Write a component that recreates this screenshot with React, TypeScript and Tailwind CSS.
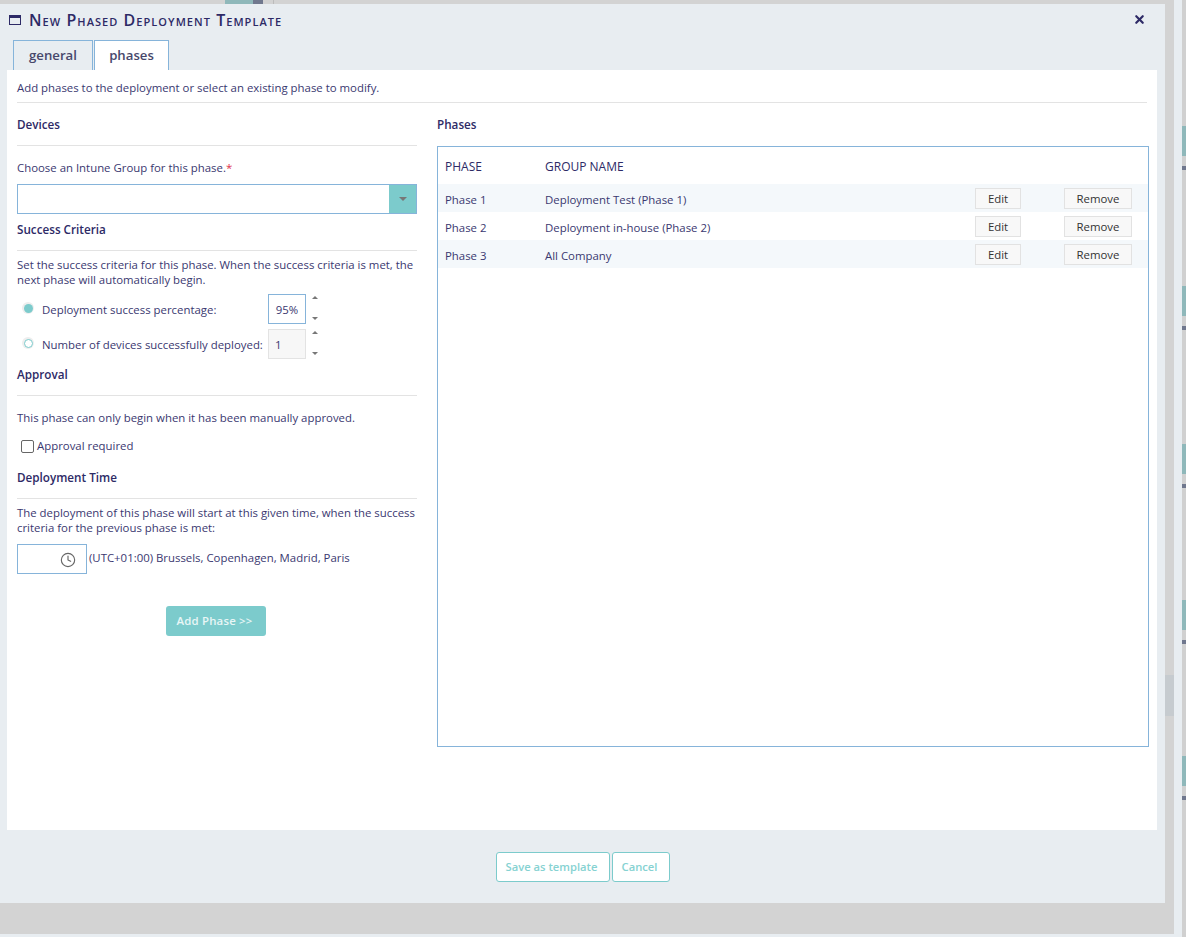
import { Clock, X } from "lucide-react";

const phases = [
    { name: "Phase 1", group: "Deployment Test (Phase 1)" },
    { name: "Phase 2", group: "Deployment in-house (Phase 2)" },
    { name: "Phase 3", group: "All Company" },
];

const sideBars = [
    { id: 1, margin: "mt-[126px]" },
    { id: 2, margin: "mt-[116px]" },
    { id: 3, margin: "mt-[114px]" },
    { id: 4, margin: "mt-[112px]" },
    { id: 5, margin: "mt-[112px]" },
];

function Heading({ children, className }: { children: string; className: string }) {
    return (
        <div className={`h-[31px] border-b border-[#e3e3e3] text-[11.7px] font-semibold leading-[18px] text-[#2d2a66] ${className}`}>
            {children}
        </div>
    );
}

function Spinner() {
    return (
        <div className="ml-[5px] flex h-[28px] w-[8px] flex-col items-center justify-between self-start py-[2px]">
            <span className="h-0 w-0 border-x-[3px] border-b-[3px] border-x-transparent border-b-[#777]" />
            <span className="h-0 w-0 border-x-[3px] border-t-[3px] border-x-transparent border-t-[#777]" />
        </div>
    );
}

function SmallButton({ label, className }: { label: string; className: string }) {
    return (
        <div className={`mt-[1px] flex h-[21px] items-center justify-center border border-[#e2e2e2] bg-[#f8f8f8] text-[11.4px] text-[#333] ${className}`}>
            {label}
        </div>
    );
}

export default function App() {
    return (
        <div className="flex h-[937px] w-[1186px] overflow-hidden bg-[#e8edf1] font-['Open_Sans',sans-serif] text-[11.4px] text-[#3a3870]">
            <div className="flex h-[934px] w-[1174px] flex-col bg-[#d3d3d3]">
                <div className="flex h-[4px] shrink-0 pl-[225px]">
                    <div className="w-[28px] bg-[#8fb8ba]" />
                    <div className="w-[10px] bg-[#70788e]" />
                    <div className="ml-[10px] w-[1px] bg-[#bcbcbc]" />
                </div>
                <div className="flex">
                    <div className="flex h-[899px] w-[1165px] flex-col bg-[#e8edf1]">
                        {/* title bar */}
                        <div className="flex h-[36px] shrink-0 items-center pl-[9px] pr-[19px]">
                            <svg width="12" height="10" viewBox="0 0 12 10" className="mr-[8px] mt-[-4px]">
                                <rect x="0.5" y="0.5" width="11" height="9" fill="none" stroke="#2d2a66" />
                                <rect x="0" y="0" width="12" height="3" fill="#2d2a66" />
                            </svg>
                            <span className="mt-[-4px] text-[16px] font-semibold leading-[20px] tracking-[1.05px] text-[#2d2a66] [font-variant:small-caps]">
                                New Phased Deployment Template
                            </span>
                            <X className="ml-auto mt-[-6px] h-[13px] w-[13px] text-[#2d2a66]" strokeWidth={4} />
                        </div>

                        {/* tabs */}
                        <div className="flex h-[30px] shrink-0 gap-[1px] pl-[13px]">
                            <div className="flex w-[80px] items-center justify-center border border-b-0 border-[#86b4da] text-[13.2px] font-semibold text-[#47476b]">
                                general
                            </div>
                            <div className="flex w-[75px] items-center justify-center border border-b-0 border-[#86b4da] bg-white text-[13.2px] font-semibold text-[#47476b]">
                                phases
                            </div>
                        </div>

                        {/* tab content */}
                        <div className="ml-[7px] h-[760px] w-[1150px] shrink-0 bg-white pl-[10px] pr-[10px]">
                            <div className="h-[33px] border-b border-[#e3e3e3] pt-[10px] leading-[16px]">
                                Add phases to the deployment or select an existing phase to modify.
                            </div>
                            <div className="flex gap-[20px]">
                                <div className="w-[400px] shrink-0">
                                    <Heading className="mt-[12px]">Devices</Heading>
                                    <div className="mt-[14px] leading-[16px]">
                                        Choose an Intune Group for this phase.<span className="text-[#e0324b]">*</span>
                                    </div>
                                    <div className="mt-[8px] flex h-[30px] border border-[#86b4da]">
                                        <div className="flex-1" />
                                        <div className="flex w-[27px] items-center justify-center bg-[#7ccbcc]">
                                            <span className="h-0 w-0 border-x-[4px] border-t-[4px] border-x-transparent border-t-[#777]" />
                                        </div>
                                    </div>

                                    <Heading className="mt-[6px]">Success Criteria</Heading>
                                    <p className="mt-[6px] leading-[15px]">
                                        Set the success criteria for this phase. When the success criteria is met, the next phase will automatically begin.
                                    </p>
                                    <div className="mt-[7px] flex h-[30px] items-center pl-[5px]">
                                        <span className="mt-[-2px] flex h-[12px] w-[12px] items-center justify-center rounded-full bg-[#eeeeee]">
                                            <span className="h-[9px] w-[9px] rounded-full bg-[#7ccbcc]" />
                                        </span>
                                        <span className="ml-[8px] mt-[1px] w-[226px]">Deployment success percentage:</span>
                                        <div className="flex h-[30px] w-[38px] items-center justify-center border border-[#86b4da] pt-[1px]">95%</div>
                                        <Spinner />
                                    </div>
                                    <div className="mt-[5px] flex h-[30px] items-center pl-[5px]">
                                        <span className="mt-[-2px] flex h-[12px] w-[12px] items-center justify-center rounded-full bg-[#eeeeee]">
                                            <span className="h-[9px] w-[9px] rounded-full border-[1.5px] border-[#7ccbcc] bg-white" />
                                        </span>
                                        <span className="ml-[8px] mt-[1px] w-[226px] whitespace-nowrap">Number of devices successfully deployed:</span>
                                        <div className="flex h-[30px] w-[38px] items-center border border-[#e3e3e3] bg-[#f7f7f7] pl-[6px] pt-[1px]">1</div>
                                        <Spinner />
                                    </div>

                                    <Heading className="mt-[6px]">Approval</Heading>
                                    <div className="mt-[14px] leading-[16px]">This phase can only begin when it has been manually approved.</div>
                                    <div className="mt-[12px] flex h-[16px] items-center pl-[4px]">
                                        <span className="h-[13px] w-[13px] rounded-[2px] border border-[#666] bg-white" />
                                        <span className="ml-[3px]">Approval required</span>
                                    </div>

                                    <Heading className="mt-[14px]">Deployment Time</Heading>
                                    <p className="mt-[6px] leading-[15px]">
                                        The deployment of this phase will start at this given time, when the success criteria for the previous phase is met:
                                    </p>
                                    <div className="mt-[9px] flex h-[30px]">
                                        <div className="flex w-[70px] items-center justify-end border border-[#86b4da] pr-[10px]">
                                            <Clock className="mt-[2px] h-[16px] w-[16px] text-[#666]" strokeWidth={1.7} />
                                        </div>
                                        <span className="ml-[2px] mt-[6px] leading-[16px]">(UTC+01:00) Brussels, Copenhagen, Madrid, Paris</span>
                                    </div>
                                    <div className="ml-[149px] mt-[32px] flex h-[30px] w-[100px] items-center justify-center rounded-[3px] bg-[#7ccbcc] pr-[3px] font-semibold tracking-[0.2px] text-[#e8f6f6]">
                                        Add Phase &gt;&gt;
                                    </div>
                                </div>

                                <div className="w-[712px] shrink-0">
                                    <div className="mt-[12px] h-[31px] text-[11.7px] font-semibold leading-[18px] text-[#2d2a66]">Phases</div>
                                    <div className="h-[601px] border border-[#86b4da]">
                                        <div className="flex h-[37px] items-center pl-[7px] pt-[3px] text-[12px] font-medium text-[#2d2a66]">
                                            <span className="w-[100px]">PHASE</span>
                                            <span>GROUP NAME</span>
                                        </div>
                                        {phases.map((phase, i) => (
                                            <div key={phase.name} className={`flex h-[28px] items-center pl-[7px] ${i % 2 === 0 ? "bg-[#f4f8fb]" : ""}`}>
                                                <span className="w-[100px] pt-[3px]">{phase.name}</span>
                                                <span className="w-[430px] pt-[3px]">{phase.group}</span>
                                                <SmallButton label="Edit" className="w-[46px]" />
                                                <SmallButton label="Remove" className="ml-[43px] w-[68px]" />
                                            </div>
                                        ))}
                                    </div>
                                </div>
                            </div>
                        </div>

                        {/* footer buttons */}
                        <div className="flex gap-[2px] pl-[496px] pt-[22px]">
                            <div className="flex h-[30px] w-[114px] items-center justify-center rounded-[3px] border border-[#7ccbcc] bg-white pr-[3px] text-[11.2px] font-semibold text-[#86d2d2]">
                                Save as template
                            </div>
                            <div className="flex h-[30px] w-[58px] items-center justify-center rounded-[3px] border border-[#7ccbcc] bg-white pr-[3px] text-[11.2px] font-semibold text-[#86d2d2]">
                                Cancel
                            </div>
                        </div>
                    </div>
                    {/* modal scrollbar */}
                    <div className="w-[9px] pt-[671px]">
                        <div className="h-[41px] bg-[#c6cbcf]" />
                    </div>
                </div>
            </div>
            <div className="ml-[8px] flex h-[937px] w-[4px] flex-col bg-[#d0d0d0]">
                {sideBars.map((bar) => (
                    <div key={bar.id} className={bar.margin}>
                        <div className="h-[30px] bg-[#8fb8ba]" />
                        <div className="mt-[10px] h-[4px] bg-[#70788e]" />
                    </div>
                ))}
            </div>
        </div>
    );
}
